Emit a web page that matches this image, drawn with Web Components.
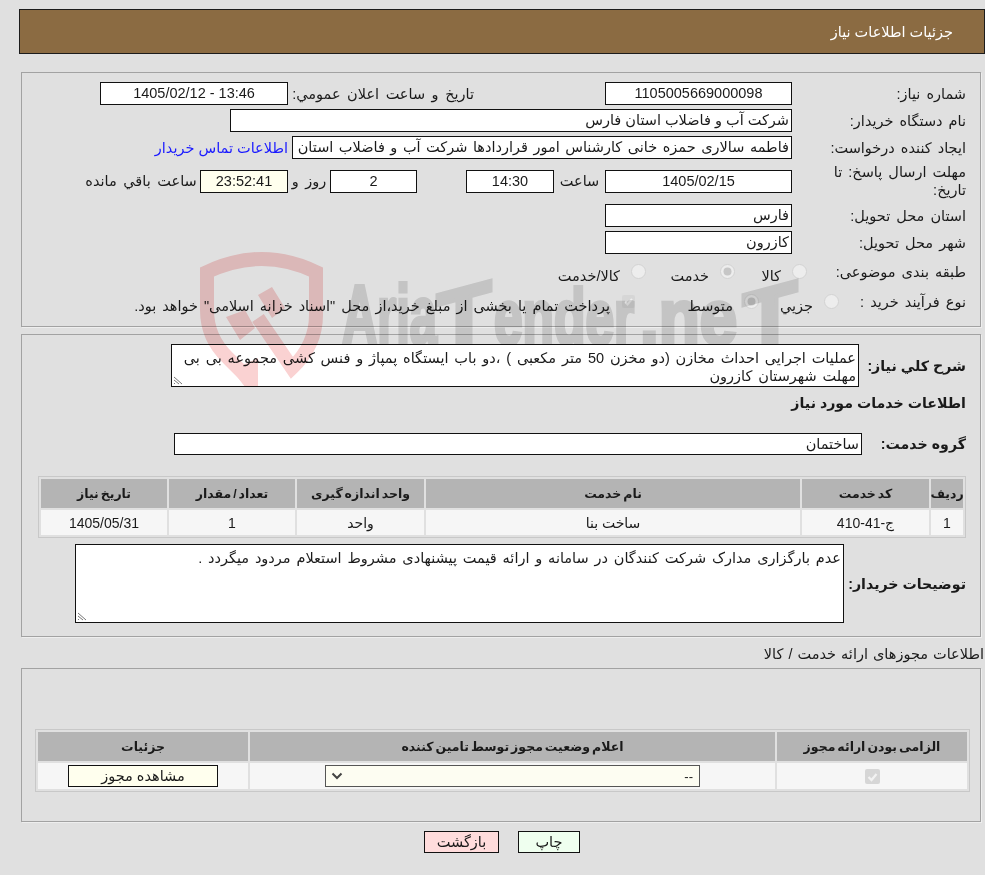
<!DOCTYPE html>
<html lang="fa" dir="rtl">
<head>
<meta charset="utf-8">
<title>جزئیات اطلاعات نیاز</title>
<style>
html,body{margin:0;padding:0;background:#e0e0e0;}
body{font-family:"Liberation Sans","DejaVu Sans",sans-serif;font-size:14.5px;color:#1a1a1a;}
</style>
</head>
<body>
<need-page>
  <page-title>جزئیات اطلاعات نیاز</page-title>

  <need-panel top="18" h="255" pad="9">
    <form-row label="شماره نیاز:">
      <text-box w="187" center>1105005669000098</text-box>
      <form-label w="317" pad="131">تاريخ و ساعت اعلان عمومي:</form-label>
      <text-box w="188" center dir="ltr">1405/02/12 - 13:46</text-box>
    </form-row>
    <form-row label="نام دستگاه خریدار:" top="4">
      <text-box w="562">شرکت آب و فاضلاب استان فارس</text-box>
    </form-row>
    <form-row label="ایجاد کننده درخواست:" top="4">
      <text-box w="500" style="word-spacing:1.500px">فاطمه سالاری حمزه خانی کارشناس امور قراردادها شرکت آب و فاضلاب استان فارس</text-box>
      <a>اطلاعات تماس خریدار</a>
    </form-row>
    <form-row label="مهلت ارسال پاسخ: تا&lt;br&gt;تاریخ:" top="5" rh="34">
      <text-box w="187" center>1405/02/15</text-box>
      <form-label w="51" mid>ساعت</form-label>
      <text-box w="88" center>14:30</text-box>
      <form-label w="49"></form-label>
      <text-box w="87" center>2</text-box>
      <form-label w="42" mid>روز و</form-label>
      <text-box w="88" center tint>23:52:41</text-box>
      <form-label w="118" mid>ساعت باقي مانده</form-label>
    </form-row>
    <form-row label="استان محل تحویل:" top="6">
      <text-box w="187">فارس</text-box>
    </form-row>
    <form-row label="شهر محل تحویل:" top="4">
      <text-box w="187">کازرون</text-box>
    </form-row>
    <form-row label="طبقه بندی موضوعی:" top="4" rh="28" lw="173">
      <radio-opt label="کالا" w="72"></radio-opt>
      <radio-opt label="خدمت" w="89" on></radio-opt>
      <radio-opt label="کالا/خدمت" w="120"></radio-opt>
    </form-row>
    <form-row label="نوع فرآیند خرید :" top="2" rh="28" lw="141">
      <radio-opt label="جزيي" w="80"></radio-opt>
      <radio-opt label="متوسط" w="123" on></radio-opt>
      <radio-opt label="پرداخت تمام یا بخشی از مبلغ خرید،از محل &quot;اسناد خزانه اسلامی&quot; خواهد بود." w="500" square></radio-opt>
    </form-row>
  </need-panel>

  <need-panel top="7" h="303" pad="9">
    <desc-row label="شرح كلي نیاز:" lw="121" h="43" w="688">عملیات اجرایی احداث مخازن (دو مخزن 50 متر مکعبی ) ،دو باب ایستگاه پمپاژ و فنس کشی مجموعه بی بی<br>مهلت شهرستان کازرون</desc-row>
    <section-head>اطلاعات خدمات مورد نیاز</section-head>
    <service-group label="گروه خدمت:">ساختمان</service-group>
    <data-grid
      cols="32,127,374,127,126,126"
      heads="ردیف|کد خدمت|نام خدمت|واحد اندازه گیری|تعداد / مقدار|تاریخ نیاز"
      cells="1|ج-41-410|ساخت بنا|واحد|1|1405/05/31"></data-grid>
    <desc-row label="توضیحات خریدار:" lw="136" h="79" w="769" top="6">عدم بارگزاری مدارک شرکت کنندگان در سامانه و ارائه قیمت پیشنهادی مشروط استعلام مردود میگردد .</desc-row>
  </need-panel>

  <plain-title>اطلاعات مجوزهای ارائه خدمت / کالا</plain-title>

  <need-panel top="0" h="154" pad="0">
    <license-grid></license-grid>
  </need-panel>

  <action-bar></action-bar>
  <water-mark></water-mark>
</need-page>

<script>
class BaseEl extends HTMLElement{
  constructor(){
    super();
    this.attachShadow({mode:'open'});
  }
  render(html){
    const t=document.createElement('template');
    t.innerHTML=html;
    this.shadowRoot.appendChild(t.content.cloneNode(true));
  }
}

class NeedPage extends BaseEl{
  connectedCallback(){
    this.render(`<style>
      :host{display:block;position:relative;width:985px;height:875px;box-sizing:border-box;padding-top:9px;overflow:hidden}
    </style><slot></slot>`);
  }
}
class PageTitle extends BaseEl{
  connectedCallback(){
    this.render(`<style>
      :host{display:flex;align-items:center;box-sizing:border-box;height:45px;margin-left:19px;
        background:#8b6b42;border:1px solid #1c1c1c;padding:0 31px 0 0;color:#fff}
    </style><slot></slot>`);
  }
}
class NeedPanel extends BaseEl{
  connectedCallback(){
    const top=this.getAttribute('top'),h=this.getAttribute('h'),pad=this.getAttribute('pad');
    this.render(`<style>
      :host{display:block;box-sizing:border-box;border:1px solid #a2a2a2;box-shadow:1px 1px 0 #eee;
        margin:${top}px 4px 0 21px;height:${h}px;padding-top:${pad}px}
    </style><slot></slot>`);
  }
}
class FormRow extends BaseEl{
  connectedCallback(){
    const lw=this.getAttribute('lw')||188;
    const rh=this.getAttribute('rh')||23;
    const top=this.getAttribute('top')||0;
    this.render(`<style>
      :host{display:flex;align-items:center;box-sizing:border-box;margin-top:${top}px;height:${rh}px}
      .l{width:${lw}px;flex:none;box-sizing:border-box;padding-right:14px;line-height:18px;word-spacing:2px}
      ::slotted(a){color:#1a1aff;margin-right:4px;white-space:nowrap}
    </style><div class="l">${this.getAttribute('label')}</div><slot></slot>`);
  }
}
class TextBox extends BaseEl{
  connectedCallback(){
    const center=this.hasAttribute('center');
    const tint=this.hasAttribute('tint');
    this.render(`<style>
      :host{display:block;flex:none;box-sizing:border-box;width:${this.getAttribute('w')}px;height:23px;border:1px solid #111;
        background:${tint?'#ffffee':'#fff'};text-align:${center?'center':'right'};line-height:21px;
        padding:0 2px;white-space:nowrap;overflow:hidden}
    </style><slot></slot>`);
  }
}
class FormLabel extends BaseEl{
  connectedCallback(){
    const pad=this.getAttribute('pad')||0;
    this.render(`<style>
      :host{display:block;flex:none;box-sizing:border-box;width:${this.getAttribute('w')}px;padding-right:${pad}px;
        text-align:${this.hasAttribute('mid')?'center':'right'};white-space:nowrap;word-spacing:2.500px}
    </style><slot></slot>`);
  }
}
class RadioOpt extends BaseEl{
  connectedCallback(){
    const on=this.hasAttribute('on');
    const mark=this.hasAttribute('square')
      ?`<svg width="15" height="15" viewBox="0 0 15 15"><rect x="1" y="1" width="13" height="13" rx="2" fill="#d6d6d6"/><path d="M4 8l2.500 2.500 4.500-5.500" fill="none" stroke="#efefef" stroke-width="2"/></svg>`
      :`<svg width="15" height="15" viewBox="0 0 15 15"><circle cx="7.500" cy="7.500" r="7" fill="#ededed" stroke="#d2d2d2"/>${on?'<circle cx="7.500" cy="7.500" r="4" fill="#c6c6c6"/>':''}</svg>`;
    this.render(`<style>
      :host{display:flex;flex:none;align-items:center;gap:11px;width:${this.getAttribute('w')}px;white-space:nowrap;word-spacing:2px}
      svg{flex:none;margin-bottom:2px}
      span{margin-top:8px}
    </style>${mark}<span>${this.getAttribute('label')}</span>`);
  }
}
class WaterMark extends BaseEl{
  connectedCallback(){
    this.render(`<style>
      :host{position:absolute;left:195px;top:245px;width:620px;height:145px;display:block;pointer-events:none;mix-blend-mode:multiply}
      svg{display:block}
      text{font-family:"Liberation Sans",sans-serif;font-weight:700;fill:#dfdfdf;stroke:#dfdfdf;stroke-width:4px}
    </style>
    <svg width="620" height="145" viewBox="195 245 620 145">
      <defs><clipPath id="lt"><rect x="195" y="245" width="620" height="99"/></clipPath></defs>
      <path d="M246 376L228 358Q207 338 207 310V272Q262 246 316 272V315Q316 345 292 368L258 318" fill="none" stroke="#fad2d2" stroke-width="14"/>
      <path d="M232 370L258 358V387H245Z" fill="#fad2d2"/>
      <path d="M226 317L245 310L255 328L240 340Z M258 295L272 287L285 308L272 318Z" fill="#fad2d2"/>
      <g clip-path="url(#lt)">
        <text font-size="84" direction="ltr" x="342" y="344" textLength="95" lengthAdjust="spacingAndGlyphs">Aria</text>
        <text font-size="90" direction="ltr" text-anchor="middle" transform="translate(464 350) skewY(-15)">T</text>
        <text font-size="78" direction="ltr" x="494" y="344" textLength="140" lengthAdjust="spacingAndGlyphs">ender</text>
        <text font-size="78" direction="ltr" x="640" y="344" textLength="97" lengthAdjust="spacingAndGlyphs">.ne</text>
        <text font-size="90" direction="ltr" text-anchor="middle" transform="translate(770 350) skewY(-15)">T</text>
      </g>
    </svg>`);
  }
}
class DescRow extends BaseEl{
  connectedCallback(){
    const top=this.getAttribute('top')||0;
    this.render(`<style>
      :host{display:flex;align-items:center;margin-top:${top}px}
      .l{width:${this.getAttribute('lw')}px;flex:none;box-sizing:border-box;padding-right:14px;font-weight:700;font-size:14.200px;white-space:nowrap}
      .b{position:relative;flex:none;box-sizing:border-box;width:${this.getAttribute('w')}px;height:${this.getAttribute('h')}px;border:1px solid #111;background:#fff;
         padding:4px 2px 0;line-height:18px;overflow:hidden;word-spacing:1.800px}
      svg{position:absolute;left:1px;bottom:1px}
    </style>
    <div class="l">${this.getAttribute('label')}</div>
    <div class="b"><slot></slot>
      <svg width="10" height="9" viewBox="0 0 10 9"><path d="M1 1l8 7M1 4l5 4M1 7l1 1" stroke="#777" fill="none"/></svg>
    </div>`);
  }
}
class SectionHead extends BaseEl{
  connectedCallback(){
    this.render(`<style>
      :host{display:block;font-weight:700;font-size:14.200px;margin-top:6px;height:21px;line-height:21px;padding-right:14px}
    </style><slot></slot>`);
  }
}
class ServiceGroup extends BaseEl{
  connectedCallback(){
    this.render(`<style>
      :host{display:flex;align-items:center;height:22px;margin-top:19px}
      .l{width:118px;box-sizing:border-box;padding-right:14px;font-weight:700;font-size:14.200px;white-space:nowrap}
      .b{box-sizing:border-box;width:688px;height:22px;border:1px solid #111;background:#fff;line-height:20px;padding:0 2px}
    </style><div class="l">${this.getAttribute('label')}</div><div class="b"><slot></slot></div>`);
  }
}
class DataGrid extends BaseEl{
  connectedCallback(){
    const cols=this.getAttribute('cols').split(',').map(c=>c+'px').join(' ');
    const heads=this.getAttribute('heads').split('|').map(h=>`<div class="h">${h}</div>`).join('');
    const cells=this.getAttribute('cells').split('|').map(h=>`<div class="c">${h}</div>`).join('');
    this.render(`<style>
      :host{display:block;box-sizing:border-box;width:928px;margin:21px 14px 6px 16px;border:1px solid #c8c8c8;padding:2px}
      .g{display:grid;grid-template-columns:${cols};grid-template-rows:29px 25px;gap:2px}
      .h{background:#b4b4b4;font-weight:700;font-size:12.500px;word-spacing:-1.500px;display:flex;align-items:center;justify-content:center}
      .c{background:#f6f6f6;font-size:14px;display:flex;align-items:center;justify-content:center}
    </style><div class="g">${heads}${cells}</div>`);
  }
}
class PlainTitle extends BaseEl{
  connectedCallback(){
    this.render(`<style>
      :host{display:block;box-sizing:border-box;height:31px;padding-top:7px;line-height:20px;padding-right:1px;word-spacing:1px}
    </style><slot></slot>`);
  }
}
class LicenseGrid extends BaseEl{
  connectedCallback(){
    this.render(`<style>
      :host{display:block;box-sizing:border-box;width:935px;margin:60px 10px 0 13px;border:1px solid #c8c8c8;padding:2px}
      .g{display:grid;grid-template-columns:190px 525px 210px;grid-template-rows:29px 26px;gap:2px}
      .h{background:#b4b4b4;font-weight:700;font-size:12.500px;word-spacing:-1.500px;display:flex;align-items:center;justify-content:center}
      .c{background:#f6f6f6;display:flex;align-items:center;justify-content:center}
      .sel{box-sizing:border-box;width:375px;height:22px;border:1px solid #555;background:#fdfdf2;display:flex;align-items:center;justify-content:space-between;padding:0 6px 0 5px;font-size:13px}
      .btn{box-sizing:border-box;width:150px;height:22px;border:1px solid #111;background:#ffffee;text-align:center;line-height:20px}
    </style>
    <div class="g">
      <div class="h">الزامی بودن ارائه مجوز</div>
      <div class="h">اعلام وضعیت مجوز توسط تامین کننده</div>
      <div class="h">جزئیات</div>
      <div class="c"><svg width="15" height="15" viewBox="0 0 15 15"><rect width="15" height="15" rx="2" fill="#d6d6d6"/><path d="M3.500 8l3 3 5-6" fill="none" stroke="#f2f2f2" stroke-width="2.200"/></svg></div>
      <div class="c"><div class="sel"><span>--</span><svg width="12" height="8" viewBox="0 0 12 8"><path d="M1.500 1.500l4.500 4.500 4.500-4.500" fill="none" stroke="#444" stroke-width="2"/></svg></div></div>
      <div class="c"><div class="btn">مشاهده مجوز</div></div>
    </div>`);
  }
}
class ActionBar extends BaseEl{
  connectedCallback(){
    this.render(`<style>
      :host{display:flex;justify-content:center;gap:19px;margin-top:9px;padding-left:19px}
      .b{box-sizing:border-box;width:62px;height:22px;border:1px solid #111;text-align:center;line-height:20px}
      .p{background:#efffef}
      .k{background:#ffdcdc;width:75px}
    </style><div class="b p">چاپ</div><div class="b k">بازگشت</div>`);
  }
}
const defs={'need-page':NeedPage,'page-title':PageTitle,'need-panel':NeedPanel,'form-row':FormRow,'text-box':TextBox,
  'form-label':FormLabel,'radio-opt':RadioOpt,'water-mark':WaterMark,'desc-row':DescRow,'section-head':SectionHead,
  'service-group':ServiceGroup,'data-grid':DataGrid,'plain-title':PlainTitle,'license-grid':LicenseGrid,'action-bar':ActionBar};
for(const n in defs)customElements.define(n,defs[n]);
</script>
</body>
</html>
